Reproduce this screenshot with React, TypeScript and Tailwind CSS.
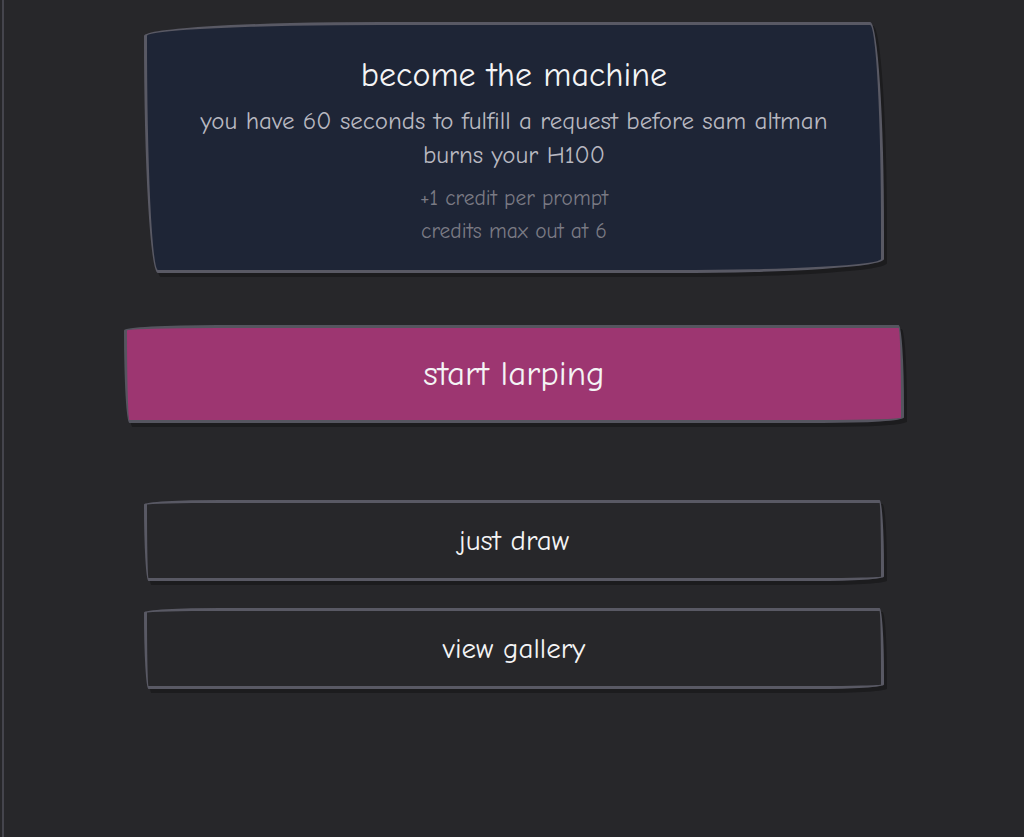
const sketchy = 'rounded-[255px_15px_225px_15px/15px_225px_15px_255px]';
const font = { fontFamily: '"Comic Sans MS", "Comic Neue", "Noto Sans", sans-serif' };

function MenuButton({ label }: { label: string }) {
  return (
    <button
      className={`flex h-[81px] w-full items-center justify-center border-[3px] border-[#595964] bg-[#27272a] text-[29px] text-[#f4f4f5] shadow-[3px_4px_0_#1c1c1e] ${sketchy}`}
    >
      {label}
    </button>
  );
}

export default function App() {
  return (
    <div className="min-h-[837px] bg-[#27272a] pl-[2px]" style={font}>
      <div className="min-h-[837px] border-l-2 border-[#45454d]">
        <div className="mx-auto flex w-[740px] flex-col pt-[22px]">
          {/* intro card */}
          <div
            className={`flex h-[251px] flex-col items-center border-[3px] border-[#595964] bg-[#1e2536] px-10 pt-[28px] text-center shadow-[3px_4px_0_#1c1c1e] ${sketchy}`}
          >
            <h1 className="text-[34px] leading-[44px] text-[#f4f4f5]">become the machine</h1>
            <p className="mt-[7px] text-[25px] leading-[34px] text-[#b8b8c0]">
              you have 60 seconds to fulfill a request before sam altman burns your H100
            </p>
            <p className="mt-[10px] text-[21.5px] leading-[33px] text-[#7a7a84]">+1 credit per prompt</p>
            <p className="text-[21.5px] leading-[33px] text-[#7a7a84]">credits max out at 6</p>
          </div>

          {/* primary action */}
          <button
            className={`mx-[-20px] mt-[52px] flex h-[98px] items-center justify-center border-[3px] border-[#55555f] bg-[#9d3671] text-[35px] text-[#f4f4f5] shadow-[3px_4px_0_#1c1c1e] ${sketchy}`}
          >
            start larping
          </button>

          <div className="mt-[77px] flex flex-col gap-[27px]">
            <MenuButton label="just draw" />
            <MenuButton label="view gallery" />
          </div>
        </div>
      </div>
    </div>
  );
}
